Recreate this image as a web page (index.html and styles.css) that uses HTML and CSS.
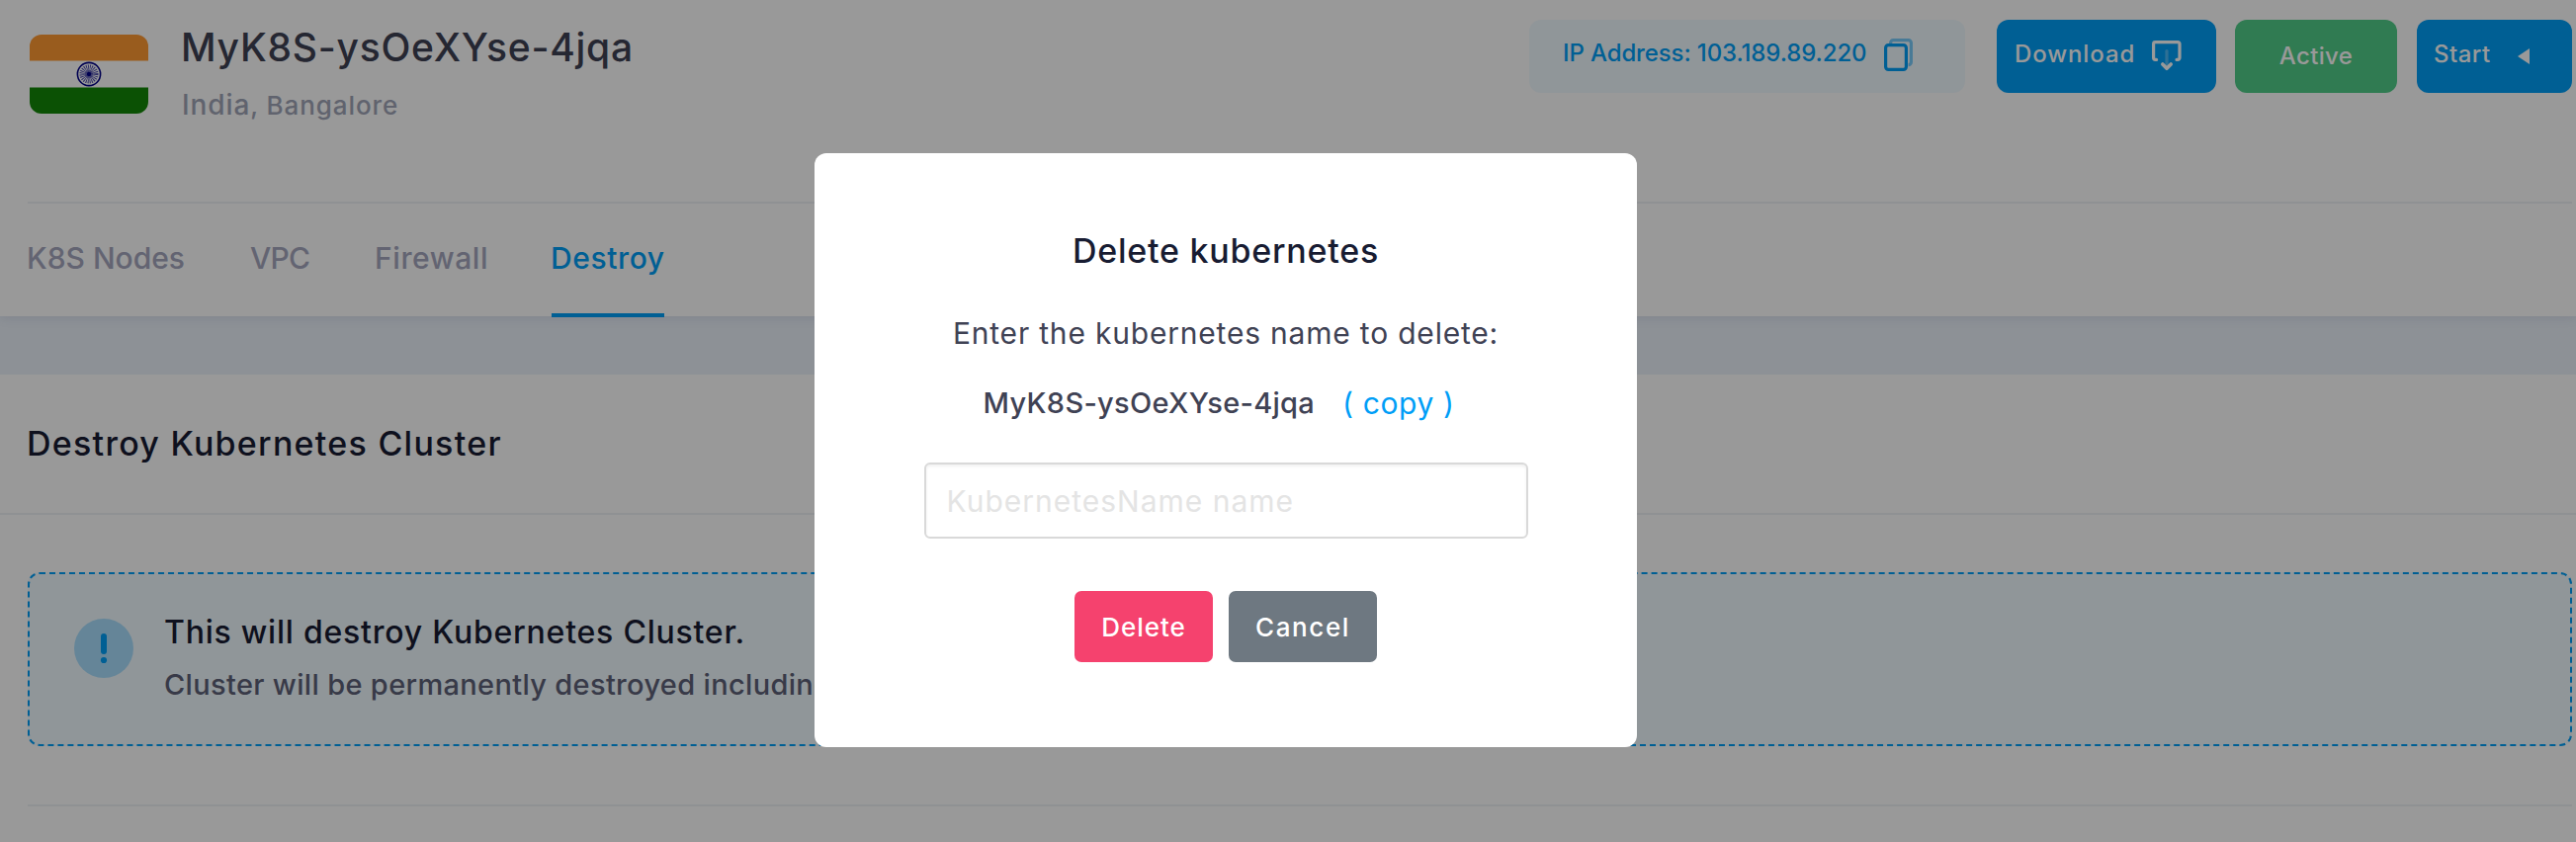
FILE: index.html
```html
<!DOCTYPE html>
<html lang="en">
<head>
<meta charset="utf-8">
<title>MyK8S-ysOeXYse-4jqa</title>
<link rel="stylesheet" href="styles.css">
</head>
<body>
<header class="cluster">
  <div class="summary">
    <svg class="flag" viewBox="0 0 120 80">
      <clipPath id="round"><rect width="120" height="80" rx="12"/></clipPath>
      <g clip-path="url(#round)">
        <rect width="120" height="80" fill="#fff"/>
        <rect width="120" height="26.5" fill="#ff9933"/>
        <rect y="53.5" width="120" height="26.5" fill="#138808"/>
      </g>
      <circle cx="60" cy="40" r="11.6" fill="#fff" stroke="#000088" stroke-width="1.6"/>
      <circle cx="60" cy="40" r="5.5" fill="none" stroke="#000088" stroke-width="8" stroke-dasharray=".72 .72" opacity=".7"/>
      <circle cx="60" cy="40" r="4" fill="#000088" opacity=".35"/>
      <circle cx="60" cy="40" r="2.2" fill="#000088"/>
    </svg>
    <div class="identity">
      <h1 class="name">MyK8S-ysOeXYse-4jqa</h1>
      <p class="place"><span class="country">India</span>, Bangalore</p>
    </div>
    <div class="actions">
      <div class="pill ip">
        <span>IP Address: 103.189.89.220</span>
        <svg class="icon-copy" viewBox="0 0 32 36" fill="none" stroke="#009ef7" stroke-width="3.2">
          <path d="M8.6 6V5.4a2.8 2.8 0 0 1 2.8-2.8h15.2a2.8 2.8 0 0 1 2.8 2.8v19.4a2.8 2.8 0 0 1-2.8 2.8" opacity=".5"/>
          <rect x="3.6" y="7.6" width="20.8" height="24.8" rx="2.8"/>
        </svg>
      </div>
      <button class="pill download">
        <span>Download</span>
        <svg class="icon-download" viewBox="0 0 36 36" fill="none" stroke="#fff" stroke-width="3.2" stroke-linecap="round" stroke-linejoin="round">
          <path d="M7.6 22.4H6.4a1.8 1.8 0 0 1-1.8-1.8V6.4a1.8 1.8 0 0 1 1.8-1.8h22.8a1.8 1.8 0 0 1 1.8 1.8v14.2a1.8 1.8 0 0 1-1.8 1.8H28"/>
          <path d="M18 13.5v14" opacity=".3"/>
          <path d="M13.8 27l4.2 4.3 4.2-4.3" stroke-width="3.6"/>
        </svg>
      </button>
      <button class="pill active">Active</button>
      <button class="pill start">
        <span>Start</span>
        <svg class="icon-caret" viewBox="0 0 12 16"><path d="M12 0v16L0 8z" fill="#fff"/></svg>
      </button>
    </div>
  </div>
  <nav class="tabs">
    <a class="tab tab-nodes">K8S Nodes</a>
    <a class="tab tab-vpc">VPC</a>
    <a class="tab">Firewall</a>
    <a class="tab current">Destroy</a>
  </nav>
</header>
<main class="panel">
  <h2 class="panel-title">Destroy Kubernetes Cluster</h2>
  <section class="panel-body">
    <div class="notice">
      <svg class="icon-alert" viewBox="0 0 60 60">
        <circle cx="30" cy="30" r="30" fill="#009ef7" opacity=".3"/>
        <rect x="27" y="15" width="6" height="21" rx="3" fill="#009ef7"/>
        <circle cx="30" cy="42" r="3.1" fill="#009ef7"/>
      </svg>
      <div>
        <h3 class="notice-title">This will destroy Kubernetes Cluster.</h3>
        <p class="notice-text">Cluster will be permanently destroyed including</p>
      </div>
    </div>
    <hr class="rule">
  </section>
</main>
<div class="overlay">
  <div class="modal">
    <h2 class="modal-title">Delete kubernetes</h2>
    <p class="modal-text">Enter the kubernetes name to delete:</p>
    <p class="modal-name"><span>MyK8S-ysOeXYse-4jqa</span><a class="copy">( copy )</a></p>
    <input class="field" type="text" placeholder="KubernetesName name">
    <div class="buttons">
      <button class="btn delete">Delete</button>
      <button class="btn cancel">Cancel</button>
    </div>
  </div>
</div>
</body>
</html>
```
FILE: styles.css
```css
* {
  box-sizing: border-box;
  margin: 0;
  padding: 0;
}

body {
  height: 852px;
  overflow: hidden;
  background: #ebf2fa;
  font-family: Inter, sans-serif;
  font-weight: 500;
}

svg {
  flex: none;
  display: block;
}

button {
  border: 0;
  font: inherit;
  color: #fff;
}

/* Cluster header */
.cluster {
  height: 320px;
  padding: 0 4px 0 28px;
  background: #fff;
  box-shadow: 0 2px 10px rgba(70, 75, 130, .12);
}

.summary {
  display: flex;
  align-items: flex-start;
  height: 206px;
  padding-top: 20px;
  border-bottom: 2px solid #eff2f5;
}

.flag {
  width: 120px;
  height: 80px;
  margin: 15px 33px 0 2px;
}

.name {
  font-size: 39px;
  font-weight: 500;
  line-height: 56px;
  letter-spacing: .75px;
  color: #3f4254;
}

.place {
  margin-top: 11px;
  padding-left: 1px;
  font-size: 26px;
  line-height: 38px;
  letter-spacing: .9px;
  color: #a1a5b7;
}

.country {
  font-size: 28px;
}

.actions {
  display: flex;
  margin-left: auto;
}

.pill {
  display: flex;
  align-items: center;
  justify-content: space-between;
  height: 74px;
  border-radius: 12px;
  background: #009ef7;
  font-size: 24px;
}

.ip {
  width: 441px;
  margin-right: 32px;
  padding: 0 52px 7px 34px;
  background: #f1faff;
  color: #009ef7;
  letter-spacing: -.12px;
}

.icon-copy {
  width: 32px;
  height: 36px;
  margin-top: 5px;
}

.download {
  width: 222px;
  margin-right: 19px;
  padding: 0 32px 5px 18px;
  letter-spacing: .9px;
}

.icon-download {
  width: 36px;
  height: 36px;
  margin-top: 3px;
}

.active {
  justify-content: center;
  width: 164px;
  margin-right: 20px;
  padding-bottom: 1px;
  background: #50cd89;
  letter-spacing: .35px;
}

.start {
  width: 157px;
  padding: 0 43px 5px 17px;
  letter-spacing: .47px;
}

.icon-caret {
  width: 12px;
  height: 16px;
  margin-top: 4px;
}

.tabs {
  display: grid;
  grid-template-columns: 226px 126px 178px 114px;
  height: 114px;
}

.tab {
  border-bottom: 4px solid transparent;
  font-size: 30px;
  line-height: 111px;
  letter-spacing: .6px;
  text-indent: -1px;
  white-space: nowrap;
  color: #a5a7be;
}

.tab-nodes {
  letter-spacing: 0;
}

.tab-vpc {
  letter-spacing: -.8px;
}

.current {
  border-color: #009ef7;
  color: #009ef7;
}

/* Destroy panel */
.panel {
  height: 473px;
  margin-top: 59px;
  background: #fff;
}

.panel-title {
  height: 142px;
  padding-left: 27px;
  border-bottom: 2px solid #eff2f5;
  font-size: 34px;
  font-weight: 500;
  line-height: 140px;
  letter-spacing: 1.25px;
  color: #181c32;
}

.panel-body {
  padding: 58px 4px 0 28px;
}

.notice {
  display: flex;
  height: 176px;
  padding-left: 45px;
  border: 2px dashed #009ef7;
  border-radius: 12px;
  background: #f1faff;
}

.icon-alert {
  width: 60px;
  height: 60px;
  margin: 45px 31px 0 0;
}

.notice-title {
  margin-top: 35px;
  font-size: 32px;
  font-weight: 500;
  line-height: 48px;
  letter-spacing: .77px;
  color: #181c32;
}

.notice-text {
  margin-top: 7px;
  font-size: 29px;
  line-height: 44px;
  letter-spacing: .33px;
  color: #5e6278;
}

.rule {
  height: 2px;
  margin-top: 59px;
  border: 0;
  background: #eff2f5;
}

/* Delete dialog */
.overlay {
  position: fixed;
  inset: 0;
  padding: 155px 0 0 824px;
  background: rgba(0, 0, 0, .4);
}

.modal {
  display: flex;
  flex-direction: column;
  align-items: center;
  width: 832px;
  height: 601px;
  padding-top: 74px;
  border-radius: 12px;
  background: #fff;
  color: #3f4254;
}

.modal-title {
  font-size: 34px;
  font-weight: 500;
  line-height: 50px;
  letter-spacing: .75px;
  color: #181c32;
}

.modal-text {
  margin-top: 36px;
  font-size: 30px;
  font-weight: 400;
  line-height: 44px;
  letter-spacing: .8px;
}

.modal-name {
  display: flex;
  gap: 28px;
  margin-top: 27px;
  padding-right: 14px;
  font-size: 29px;
  line-height: 44px;
  letter-spacing: .3px;
}

.copy {
  font-size: 30px;
  font-weight: 400;
  letter-spacing: .6px;
  color: #009ef7;
}

.field {
  width: 611px;
  height: 77px;
  margin-top: 38px;
  padding-left: 21px;
  border: 2px solid #d9d9d9;
  border-radius: 6px;
  box-shadow: inset 0 2px 3px rgba(0, 0, 0, .06);
  font: 400 30px Inter, sans-serif;
  letter-spacing: 1px;
}

.field::placeholder {
  color: #e4e4e4;
}

.buttons {
  display: flex;
  gap: 16px;
  margin-top: 53px;
}

.btn {
  height: 72px;
  border-radius: 7px;
  font-size: 26px;
}

.delete {
  width: 140px;
  background: #f5426e;
  letter-spacing: 1px;
}

.cancel {
  width: 150px;
  background: #6e7881;
  letter-spacing: 1.6px;
}
```
